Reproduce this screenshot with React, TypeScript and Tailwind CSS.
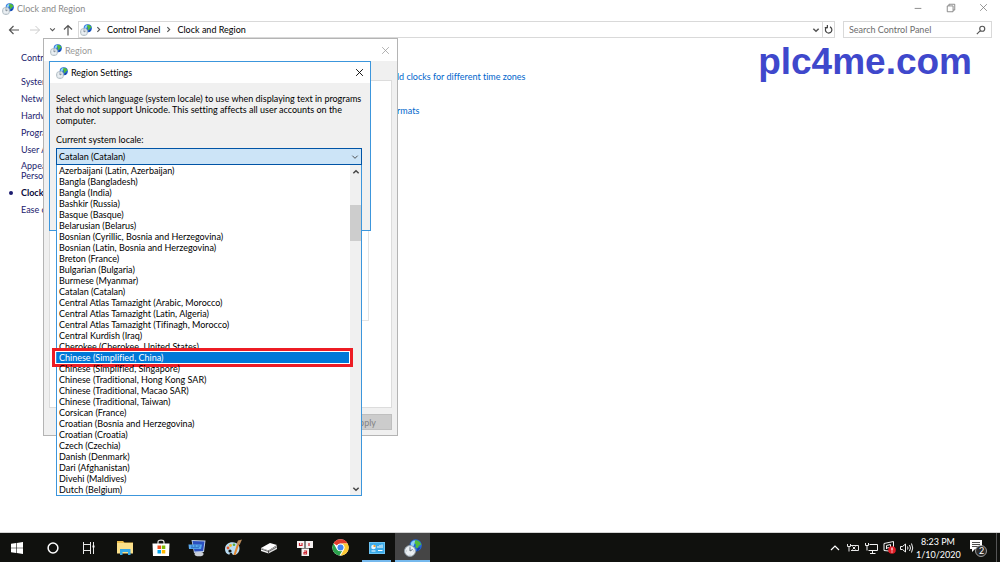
import { useState } from 'react';
import type { ReactNode } from 'react';
import clsx from 'clsx';

const categories = [
  'System and Security',
  'Network and Internet',
  'Hardware and Sound',
  'Programs',
  'User Accounts',
  'Appearance and Personalization',
  'Clock and Region',
  'Ease of Access',
];

const locales = [
  'Azerbaijani (Latin, Azerbaijan)',
  'Bangla (Bangladesh)',
  'Bangla (India)',
  'Bashkir (Russia)',
  'Basque (Basque)',
  'Belarusian (Belarus)',
  'Bosnian (Cyrillic, Bosnia and Herzegovina)',
  'Bosnian (Latin, Bosnia and Herzegovina)',
  'Breton (France)',
  'Bulgarian (Bulgaria)',
  'Burmese (Myanmar)',
  'Catalan (Catalan)',
  'Central Atlas Tamazight (Arabic, Morocco)',
  'Central Atlas Tamazight (Latin, Algeria)',
  'Central Atlas Tamazight (Tifinagh, Morocco)',
  'Central Kurdish (Iraq)',
  'Cherokee (Cherokee, United States)',
  'Chinese (Simplified, China)',
  'Chinese (Simplified, Singapore)',
  'Chinese (Traditional, Hong Kong SAR)',
  'Chinese (Traditional, Macao SAR)',
  'Chinese (Traditional, Taiwan)',
  'Corsican (France)',
  'Croatian (Bosnia and Herzegovina)',
  'Croatian (Croatia)',
  'Czech (Czechia)',
  'Danish (Denmark)',
  'Dari (Afghanistan)',
  'Divehi (Maldives)',
  'Dutch (Belgium)',
];

const MARKED = 'Chinese (Simplified, China)';

/* ---------- Icons ---------- */

const RegionIcon = ({ className }: { className: string }) => (
  <svg viewBox="0 0 24 24" className={className} aria-hidden="true">
    <circle cx="15.500" cy="8.500" r="8.200" fill="#2468d8" />
    <path d="M9 7c0-3 3-5.500 6-5l2 2-3 2-1 3-3 1z" fill="#8fd0f8" />
    <path d="M15 1.500c4 0 7.500 2.500 8 6l-3 1-2 4-3-2 1-3-2-2z" fill="#52bb3c" />
    <path d="M18 12l4-1c-1 3-3 5-5 5.500z" fill="#1b3f9c" />
    <circle cx="8" cy="16" r="7.300" fill="#e9eef2" stroke="#93a2ad" strokeWidth="1.200" />
    <path d="M8 11v5l3.500-2" stroke="#56636e" strokeWidth="1.200" fill="none" />
    <path d="M8 10v1M8 21v1M2.500 16h1M12.500 16h1" stroke="#7d8890" />
  </svg>
);

interface LineIconProps {
  d: string;
  className: string;
  width?: number;
}

const LineIcon = ({ d, className, width = 1 }: LineIconProps) => (
  <svg viewBox="0 0 12 12" className={className} fill="none" stroke="currentColor" strokeWidth={width} aria-hidden="true">
    <path d={d} />
  </svg>
);

const CLOSE = 'M1.500 1.500l9 9M10.500 1.500l-9 9';
const CHEVRON_DOWN = 'M2 4l4 4 4-4';
const CHEVRON_UP = 'M2 8l4-4 4 4';
const CHEVRON_RIGHT = 'M4 2l4 4-4 4';

const StartIcon = () => (
  <svg viewBox="0 0 12 12" className="w-3 h-3" fill="#fff">
    <path d="M0 1.700L5.200 1v4.700H0zM5.800.900L12 0v5.700H5.800zM0 6.300h5.200V11L0 10.300zM5.800 6.300H12V12l-6.200-.900z" />
  </svg>
);

const CortanaIcon = () => (
  <svg viewBox="0 0 12 12" className="w-3 h-3">
    <circle cx="6" cy="6" r="4.900" fill="none" stroke="#fff" strokeWidth="1.500" />
  </svg>
);

const TaskViewIcon = () => (
  <svg viewBox="0 0 12 12" className="w-3 h-3" fill="none" stroke="#e8e8e8">
    <path d="M.500 0v12M7.500 0v12M0 2.500h8M0 8.500h8M10.500 0v12" />
    <path d="M9.500 3.500h2v2h-2z" fill="#fff" stroke="none" />
  </svg>
);

const ExplorerIcon = () => (
  <svg viewBox="0 0 16 14" className="w-4 h-[14px]">
    <path d="M0 0h6l1.500 1.500H16V12H0z" fill="#eebf4d" />
    <path d="M0 2h16v10.500H0z" fill="#fbe08a" />
    <path d="M3 8h10.500v6H11v-3H5.500v3H3z" fill="#35a7e6" />
  </svg>
);

const StoreIcon = () => (
  <svg viewBox="0 0 18 17" className="w-[18px] h-[17px]">
    <path d="M6 5V3c0-2.500 6-2.500 6 0v2" fill="none" stroke="#ddd" strokeWidth="1.200" />
    <path d="M.500 4.500h17L17 17H1z" fill="#fff" />
    <path d="M5.500 6.500H9V10H5.500z" fill="#f25022" />
    <path d="M9.800 6.500h3.500V10H9.800z" fill="#7fba00" />
    <path d="M5.500 11H9v3.500H5.500z" fill="#00a4ef" />
    <path d="M9.800 11h3.500v3.500H9.800z" fill="#ffb900" />
  </svg>
);

const MonitorIcon = () => (
  <svg viewBox="0 0 18 18" className="w-[18px] h-[18px]">
    <ellipse cx="11" cy="15" rx="4.500" ry="2.300" fill="#c9ced6" />
    <path d="M3.500 1L17.500 1.500 16 13 6 14z" fill="#bfcde6" />
    <path d="M4.500 2l12 .500-1.400 9.500L6.500 12.500z" fill="#2b50c0" />
    <path d="M.500 5.500H14L13 10H1z" fill="#5aa9ee" />
    <path d="M3 7h2M6 7h2M9.500 7H12M3 8.700h8" stroke="#1f5fb8" strokeWidth=".8" />
  </svg>
);

const PaintIcon = () => (
  <svg viewBox="0 0 18 17" className="w-[18px] h-[17px]">
    <path d="M1 10c0-5 5-7.500 9-6.500 4 .500 5.500 3 5.500 6s-2 6-5 6.500-2-3-4-2 0 2-2 1.500S1 13 1 10z" fill="#b9dcf3" />
    <circle cx="4" cy="9" r="1.400" fill="#e2572b" />
    <circle cx="6.500" cy="6.500" r="1.400" fill="#f0b72d" />
    <circle cx="6" cy="12" r="1.600" fill="#10110e" />
    <circle cx="10" cy="5.800" r="1.300" fill="#58ad3d" />
    <path d="M9.500 16L13 5l2 1-3.500 10z" fill="#e3862e" />
    <path d="M12.500 5L14 1.500l4-1L15.500 6z" fill="#b98a5a" />
  </svg>
);

const DriveIcon = () => (
  <svg viewBox="0 0 18 12" className="w-[18px] h-3">
    <path d="M1 6l9-5 7 2L8.500 8.500z" fill="#fff" />
    <path d="M1 6l7.500 2.500v3L1 9z" fill="#f2f2f2" />
    <path d="M8.500 8.500L17 3.500V7l-8.500 4.500z" fill="#dcdcdc" />
    <path d="M1 7l7.500 2.500L17 4.800M8.500 8.500v3" stroke="#333" strokeWidth=".7" fill="none" />
  </svg>
);

const CardsIcon = () => (
  <svg viewBox="0 0 18 16" className="w-[18px] h-4">
    <path d="M1 1h7.500v7H1zM9.500 1H17v7H9.500zM5.500 8.500H13V16H5.500z" fill="#f4f1f1" />
    <path d="M3.500 3v2.500H6V3M13 3v3M8 11h2.500v3H8v-1.500h2" stroke="#cf2a35" strokeWidth="1.200" fill="none" />
  </svg>
);

const ChromeIcon = () => (
  <svg viewBox="0 0 48 48" className="w-[17px] h-[17px]">
    <circle cx="24" cy="24" r="23" fill="#fff" />
    <path d="M24 1a23 23 0 0 1 20 11.500H24a11.500 11.500 0 0 0-10 5.700L4.500 12A23 23 0 0 1 24 1z" fill="#e33b2e" />
    <path d="M4.200 12.300A23 23 0 0 0 21 46.800l9.500-16.300A11.500 11.500 0 0 1 14 29.700z" fill="#2ba24c" />
    <path d="M44 12.500H24a11.500 11.500 0 0 1 9.900 17.300L24 47a23 23 0 0 0 20-34.500z" fill="#fcc934" />
    <circle cx="24" cy="24" r="10.500" fill="#fff" />
    <circle cx="24" cy="24" r="8.500" fill="#4285f4" />
  </svg>
);

const PanelIcon = () => (
  <svg viewBox="0 0 16 12" className="w-4 h-3">
    <path d="M0 0h16v12H0z" fill="#6cc4f3" />
    <path d="M1 1h14v10H1z" fill="#3aaae8" />
    <circle cx="4.500" cy="5" r="2.300" fill="#e8f6ff" />
    <path d="M4.500 5V2.700A2.300 2.300 0 0 1 6.800 5z" fill="#f0a030" />
    <path d="M9 6V4M11 6V3M13 6V2.500M9 8.500h4.500M2.500 9h4" stroke="#fff" />
  </svg>
);

const UsbIcon = () => (
  <svg viewBox="0 0 12 10" className="w-3 h-[10px]" fill="none" stroke="#e6e6e6">
    <path d="M4 2.500h7.500v5H4M.500 1v2.500h3V1M2 3.500v5M5.500 3.500l3 3M8.500 3.500l-3 3" />
  </svg>
);

const NetworkIcon = () => (
  <svg viewBox="0 0 13 12" className="w-[13px] h-3" fill="none" stroke="#f2f2f2">
    <path d="M4.500 2.500h8v6h-9M7.500 8.500v2.500M5 11.500h5.500M.500 1v2.500h3V1M2 3.500v5" />
  </svg>
);

const AlertIcon = () => (
  <svg viewBox="0 0 13 13" className="w-[13px] h-[13px]">
    <path d="M1 2.500L10.500.500v10L1 9.500zM3.500 8V4.500l4-1v3l-4 .500" fill="none" stroke="#f2f2f2" />
    <circle cx="9" cy="9" r="3.800" fill="#e01b24" />
    <path d="M9 6.500v3M9 10.500v1" stroke="#fff" strokeWidth="1.200" />
  </svg>
);

const SpeakerIcon = () => (
  <svg viewBox="0 0 14 12" className="w-[14px] h-3" fill="none" stroke="#f2f2f2">
    <path d="M.500 4.500h2L5.500 2v8l-3-2.500h-2zM7.500 4.500q1 1.500 0 3M9.500 3q2 3 0 6M11.500 1.500q2.500 4.500 0 9" />
  </svg>
);

const NoticeIcon = () => (
  <svg viewBox="0 0 18 18" className="w-[18px] h-[18px]">
    <path d="M1 1h12v9H6l-3 3v-3H1z" fill="#fff" />
    <path d="M3 3.500h8M3 5.500h8M3 7.500h8" stroke="#222" strokeWidth=".8" />
    <circle cx="12" cy="12" r="5.500" fill="#2b2b2b" stroke="#bbb" strokeWidth=".8" />
  </svg>
);

/* ---------- Taskbar ---------- */

interface App {
  name: string;
  icon: ReactNode;
  state?: 'open' | 'active';
}

const pinned: App[] = [
  { name: 'Cortana', icon: <CortanaIcon /> },
  { name: 'Task View', icon: <TaskViewIcon /> },
  { name: 'File Explorer', icon: <ExplorerIcon /> },
  { name: 'Store', icon: <StoreIcon /> },
  { name: 'Controller', icon: <MonitorIcon /> },
  { name: 'Paint', icon: <PaintIcon /> },
  { name: 'Drive', icon: <DriveIcon /> },
  { name: 'Keys', icon: <CardsIcon /> },
  { name: 'Chrome', icon: <ChromeIcon /> },
  { name: 'Control Panel', icon: <PanelIcon />, state: 'open' },
  { name: 'Region', icon: <RegionIcon className="w-[18px] h-[18px]" />, state: 'active' },
];

const tray = [
  { name: 'Show hidden icons', icon: <LineIcon d={CHEVRON_UP} className="w-3 h-3 text-white" width={1.2} /> },
  { name: 'Safely remove hardware', icon: <UsbIcon /> },
  { name: 'Network', icon: <NetworkIcon /> },
  { name: 'Alerts', icon: <AlertIcon /> },
  { name: 'Volume', icon: <SpeakerIcon /> },
];

const Taskbar = () => (
  <footer className="flex h-[30px] bg-[#10110e] border-t border-[#d4d4d4] text-white">
    <nav aria-label="Taskbar" className="flex gap-px">
      <button aria-label="Start" className="w-[34px] flex items-center justify-center">
        <StartIcon />
      </button>
      {pinned.map((app) => (
        <button
          key={app.name}
          aria-label={app.name}
          className={clsx(
            'w-[35px] flex flex-col items-center',
            app.state === 'active' && 'bg-[#454545]'
          )}
        >
          <span className="flex-1 flex items-center">{app.icon}</span>
          {app.state && (
            <span className={clsx('h-[2px] bg-[#76b9ed] -mt-[2px]', app.state === 'active' ? 'w-full' : 'w-[29px]')} />
          )}
        </button>
      ))}
    </nav>

    <div className="ml-auto flex items-center">
      {tray.map((item) => (
        <button key={item.name} aria-label={item.name} className="w-[18px] flex justify-center">
          {item.icon}
        </button>
      ))}
      <button className="w-[44px] text-[9px] leading-[13px] text-center">
        <span className="block">8:23 PM</span>
        <span className="block">1/10/2020</span>
      </button>
      <button aria-label="Notifications" className="relative w-9 flex justify-center">
        <NoticeIcon />
        <span className="absolute left-[19px] top-[6px] text-[9px] leading-3">2</span>
      </button>
      <button aria-label="Show desktop" className="w-1 h-full border-l border-[#555]" />
    </div>
  </footer>
);

/* ---------- Explorer window ---------- */

const ExplorerHeader = () => (
  <header>
    <div className="flex h-[17px] items-center pl-[2px] text-[#8a8a8a]">
      <RegionIcon className="w-3 h-3" />
      <h1 className="pl-[3px]">Clock and Region</h1>
      <div className="ml-auto flex pb-[2px] text-[#777]">
        <button aria-label="Minimize" className="w-[33px] flex justify-center">
          <LineIcon d="M2 6.500h8" className="w-[10px] h-[10px]" />
        </button>
        <button aria-label="Restore" className="w-[33px] flex justify-center">
          <LineIcon d="M1.500 3.500h7v7h-7zM3.500 3.500v-2h7v7h-2" className="w-[10px] h-[10px]" />
        </button>
        <button aria-label="Close" className="w-[33px] flex justify-center">
          <LineIcon d={CLOSE} className="w-[9px] h-[9px]" />
        </button>
      </div>
    </div>

    <div className="flex h-[17px] mt-1 px-2 items-stretch">
      <div className="flex w-[70px] items-center text-[#555]">
        <button aria-label="Back">
          <LineIcon d="M11 6H1.500M5.500 2l-4 4 4 4" className="w-3 h-3" width={1.2} />
        </button>
        <button aria-label="Forward" className="ml-[9px] text-[#ccc]">
          <LineIcon d="M1 6h9.500M6.500 2l4 4-4 4" className="w-3 h-3" />
        </button>
        <button aria-label="Recent locations" className="ml-2">
          <LineIcon d={CHEVRON_DOWN} className="w-[7px] h-[7px]" width={1.8} />
        </button>
        <button aria-label="Up" className="ml-[6px]">
          <LineIcon d="M6 11.500V1.500M2 5.500l4-4 4 4" className="w-3 h-3" width={1.2} />
        </button>
      </div>
      <div className="flex flex-1 items-center border border-[#d9d9d9] pl-px">
        <RegionIcon className="w-3 h-3" />
        <LineIcon d={CHEVRON_RIGHT} className="ml-[3px] w-[7px] h-[7px] text-[#555]" width={2} />
        <a href="#control-panel" className="pl-[5px]">Control Panel</a>
        <LineIcon d={CHEVRON_RIGHT} className="ml-[5px] w-[7px] h-[7px] text-[#555]" width={2} />
        <a href="#clock" className="pl-[5px]">Clock and Region</a>
        <button aria-label="Previous locations" className="ml-auto w-3 flex justify-center text-[#555]">
          <LineIcon d={CHEVRON_DOWN} className="w-2 h-2" width={2.2} />
        </button>
        <button aria-label="Refresh" className="w-3 h-full flex items-center justify-center border-l border-[#d9d9d9] text-[#444]">
          <LineIcon d="M8 2.500A4.300 4.300 0 1 1 3 3.500M1 3.500h3.500V0" className="w-[9px] h-[9px]" width={1.6} />
        </button>
      </div>
      <div className="flex w-[149px] ml-2 items-center border border-[#d9d9d9] px-[5px]">
        <input
          type="search"
          aria-label="Search Control Panel"
          placeholder="Search Control Panel"
          className="min-w-0 flex-1 outline-none placeholder:text-[#6d6d6d]"
        />
        <LineIcon d="M7.500 1.500a3 3 0 1 1 0 6 3 3 0 0 1 0-6M5.500 6.500L1 11" className="w-[10px] h-[10px] text-[#555]" width={1.4} />
      </div>
    </div>
  </header>
);

const ExplorerBody = () => (
  <div className="flex pt-[14px] text-[#1b1b6e]">
    <nav aria-label="Control Panel" className="w-[124px] pl-[21px]">
      <a href="#home" className="block mb-[13px]">Control Panel Home</a>
      <ul className="flex flex-col gap-[6px]">
        {categories.map((name) => (
          <li
            key={name}
            className={clsx(
              'relative',
              name === 'Clock and Region' && 'font-bold text-[#0b0b3c]',
              name === 'Appearance and Personalization' && 'leading-[10px]'
            )}
          >
            {name === 'Clock and Region' && (
              <span className="absolute -left-3 top-1 w-1 h-1 rounded-full bg-[#1b1b6e]" />
            )}
            <a href="#category" className="block">{name}</a>
          </li>
        ))}
      </ul>
    </nav>
    <div className="flex flex-col gap-[23px] pt-[19px] pl-[146px] text-[#0066cc]">
      <a href="#clocks" className="pl-[118px]">Add clocks for different time zones</a>
      <a href="#formats">Change date, time, or number formats</a>
    </div>
    <p className="ml-auto -mt-[11px] mr-[28px] font-['Liberation_Sans',sans-serif] font-bold text-[37px] leading-[42px] text-[#3f48cc]">
      plc4me.com
    </p>
  </div>
);

/* ---------- Dialogs ---------- */

const RegionDialog = () => (
  <section
    aria-label="Region"
    className="absolute left-[43px] top-[38px] w-[355px] flex flex-col bg-[#f0f0f0] border border-[#b4b4b4]"
  >
    <div className="flex h-[22px] items-center bg-white pl-[6px] pr-[7px] text-[#999]">
      <RegionIcon className="w-3 h-3" />
      <h2 className="pl-[3px]">Region</h2>
      <button aria-label="Close Region" className="ml-auto">
        <LineIcon d={CLOSE} className="w-[9px] h-[9px]" />
      </button>
    </div>
    <div className="mt-[19px] mx-[5px] h-[328px] bg-white border border-[#dcdcdc] pl-[7px] pr-[22px]">
      <div className="h-[240px] border border-t-0 border-[#e4e4e4]" />
    </div>
    <div className="flex justify-end px-[5px] pt-[6px] pb-[5px]">
      <button disabled className="w-[55px] h-4 bg-[#cccccc] border border-[#bfbfbf] text-[#838383]">
        Apply
      </button>
    </div>
  </section>
);

interface LocaleListProps {
  onPick: (name: string) => void;
}

const LocaleList = ({ onPick }: LocaleListProps) => (
  <div className="absolute top-full left-0 z-10 w-full flex bg-white border border-t-0 border-[#3c96dc]">
    <ul role="listbox" aria-label="System locales" className="flex-1">
      {locales.map((name) => (
        <li
          key={name}
          role="option"
          aria-selected={name === MARKED}
          onClick={() => onPick(name)}
          className={clsx(
            'relative pl-[2px] mr-px cursor-default whitespace-nowrap',
            name === MARKED && 'bg-[#0078d7] text-white'
          )}
        >
          {name}
          {name === MARKED && (
            <span className="absolute -left-[5px] -right-1 -top-1 -bottom-1 border-[3px] border-[#ed1c24]">
              <span className="block h-full border border-white" />
            </span>
          )}
        </li>
      ))}
    </ul>
    <div className="w-[11px] flex flex-col items-center bg-[#f0f0f0] text-[#444]">
      <button aria-label="Scroll up" className="h-[13px]">
        <LineIcon d={CHEVRON_UP} className="w-2 h-2" width={2.2} />
      </button>
      <div className="w-full mt-[27px] h-9 bg-[#cdcdcd]" />
      <button aria-label="Scroll down" className="mt-auto h-[13px]">
        <LineIcon d={CHEVRON_DOWN} className="w-2 h-2" width={2.2} />
      </button>
    </div>
  </div>
);

const SettingsDialog = () => {
  const [locale, setLocale] = useState('Catalan (Catalan)');

  return (
    <section
      aria-label="Region Settings"
      className="absolute left-[49px] top-[61px] w-[322px] h-[170px] bg-[#f0f0f0] border border-[#3c96dc]"
    >
      <div className="flex h-[21px] items-center bg-white px-[6px]">
        <RegionIcon className="w-3 h-3" />
        <h2 className="pl-[3px]">Region Settings</h2>
        <button aria-label="Close Region Settings" className="ml-auto">
          <LineIcon d={CLOSE} className="w-[9px] h-[9px]" width={1.2} />
        </button>
      </div>
      <div className="pl-[6px] pr-2 pt-[10px]">
        <p>
          Select which language (system locale) to use when displaying text in programs that do not
          support Unicode. This setting affects all user accounts on the computer.
        </p>
        <label htmlFor="locale" className="block mt-2 mb-[3px]">
          Current system locale:
        </label>
        <div className="relative">
          <select
            id="locale"
            value={locale}
            onChange={(e) => setLocale(e.target.value)}
            className="block w-full h-[17px] appearance-none bg-[#cce4f7] border border-[#0054a6] pl-[2px]"
          >
            {locales.map((name) => (
              <option key={name}>{name}</option>
            ))}
          </select>
          <LineIcon d={CHEVRON_DOWN} className="absolute right-[3px] top-[5px] w-2 h-2 text-[#444] pointer-events-none" width={1.4} />
          <LocaleList onPick={setLocale} />
        </div>
      </div>
    </section>
  );
};

export default function App() {
  return (
    <div className="relative min-h-screen flex flex-col bg-white font-[Lato,'Open_Sans',sans-serif] text-[9px] leading-[11px] text-black [font-variant-ligatures:none]">
      <ExplorerHeader />
      <main className="flex-1">
        <ExplorerBody />
        <RegionDialog />
        <SettingsDialog />
      </main>
      <Taskbar />
    </div>
  );
}
